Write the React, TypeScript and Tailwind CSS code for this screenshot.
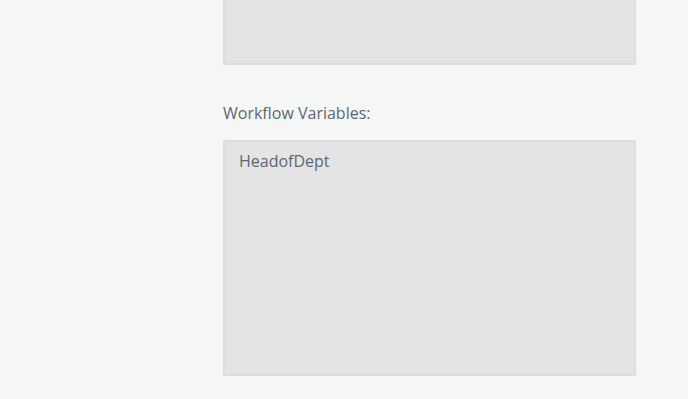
export default function App() {
  return (
    <div
      className="w-[688px] h-[399px] bg-[#f5f7f6] overflow-hidden pl-[223px]"
      style={{ fontFamily: '"Segoe UI", "Open Sans", "Noto Sans", sans-serif' }}
    >
      <div className="w-[413px] h-[65px] bg-[#e4e4e4] border-2 border-t-0 border-[#dddddd]" />
      <div className="mt-[37px] text-[16px] leading-[22px] text-[#5b6770]">Workflow Variables:</div>
      <div className="mt-[16px] w-[413px] h-[236px] bg-[#e4e4e4] border-2 border-[#dddddd] px-[14px] pt-[8px] text-[16px] leading-[22px] text-[#5b6770]">
        HeadofDept
      </div>
    </div>
  );
}
